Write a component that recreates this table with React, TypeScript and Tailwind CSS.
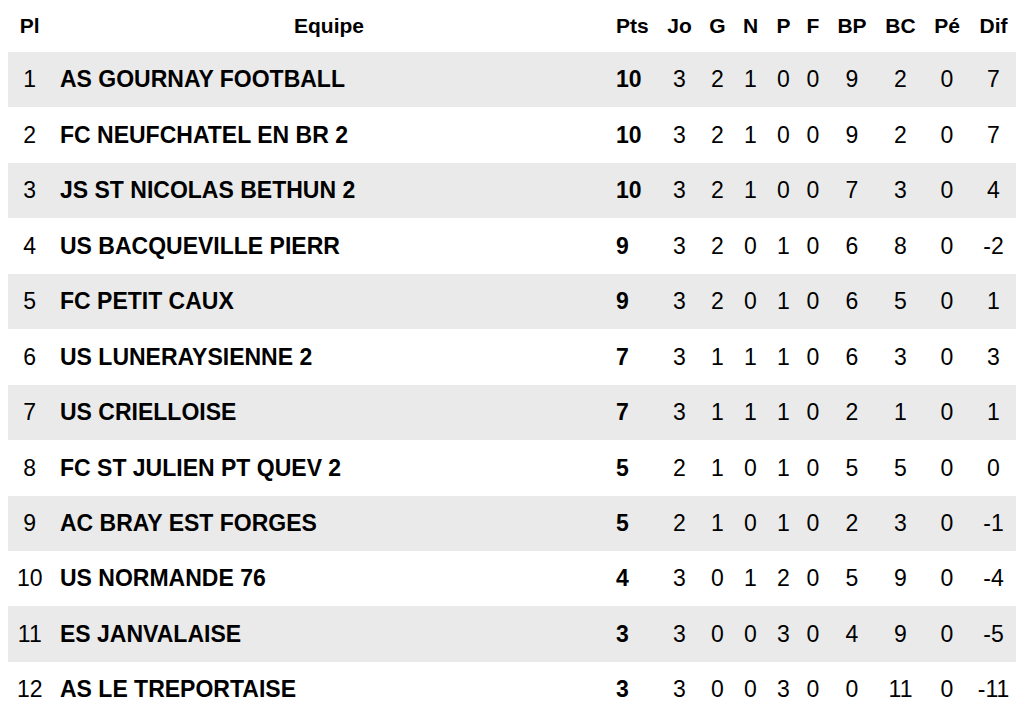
const rows: [number, string, number, number, number, number, number, number, number, number, number, number][] = [
  [1, 'AS GOURNAY FOOTBALL', 10, 3, 2, 1, 0, 0, 9, 2, 0, 7],
  [2, 'FC NEUFCHATEL EN BR 2', 10, 3, 2, 1, 0, 0, 9, 2, 0, 7],
  [3, 'JS ST NICOLAS BETHUN 2', 10, 3, 2, 1, 0, 0, 7, 3, 0, 4],
  [4, 'US BACQUEVILLE PIERR', 9, 3, 2, 0, 1, 0, 6, 8, 0, -2],
  [5, 'FC PETIT CAUX', 9, 3, 2, 0, 1, 0, 6, 5, 0, 1],
  [6, 'US LUNERAYSIENNE 2', 7, 3, 1, 1, 1, 0, 6, 3, 0, 3],
  [7, 'US CRIELLOISE', 7, 3, 1, 1, 1, 0, 2, 1, 0, 1],
  [8, 'FC ST JULIEN PT QUEV 2', 5, 2, 1, 0, 1, 0, 5, 5, 0, 0],
  [9, 'AC BRAY EST FORGES', 5, 2, 1, 0, 1, 0, 2, 3, 0, -1],
  [10, 'US NORMANDE 76', 4, 3, 0, 1, 2, 0, 5, 9, 0, -4],
  [11, 'ES JANVALAISE', 3, 3, 0, 0, 3, 0, 4, 9, 0, -5],
  [12, 'AS LE TREPORTAISE', 3, 3, 0, 0, 3, 0, 0, 11, 0, -11],
];

const cols = 'grid grid-cols-[43.5px_555px_49.5px_47px_29px_37px_29px_30px_48px_49px_44px_49px]';
const heads = ['Jo', 'G', 'N', 'P', 'F', 'BP', 'BC', 'Pé', 'Dif'];

export default function App() {
  return (
    <div className="w-[1024px] h-[717px] overflow-hidden bg-white px-2 text-black font-['Liberation_Sans',Arial,sans-serif]">
      <div className={`${cols} h-[52px] items-center text-[21px] font-bold`}>
        <div className="text-center">Pl</div>
        <div className="text-center">Equipe</div>
        <div className="pl-[9.5px]">Pts</div>
        {heads.map((h) => (
          <div key={h} className="text-center">{h}</div>
        ))}
      </div>
      {rows.map((r, i) => (
        <div
          key={r[0]}
          className={`${cols} h-[55.45px] items-center text-[23px] ${i % 2 === 0 ? 'bg-[#eaeaea]' : 'bg-white'}`}
        >
          <div className="text-center">{r[0]}</div>
          <div className="pl-[8.5px] font-bold whitespace-nowrap">{r[1]}</div>
          <div className="pl-[9.5px] font-bold">{r[2]}</div>
          {r.slice(3).map((v, j) => (
            <div key={j} className="text-center">{v}</div>
          ))}
        </div>
      ))}
    </div>
  );
}
